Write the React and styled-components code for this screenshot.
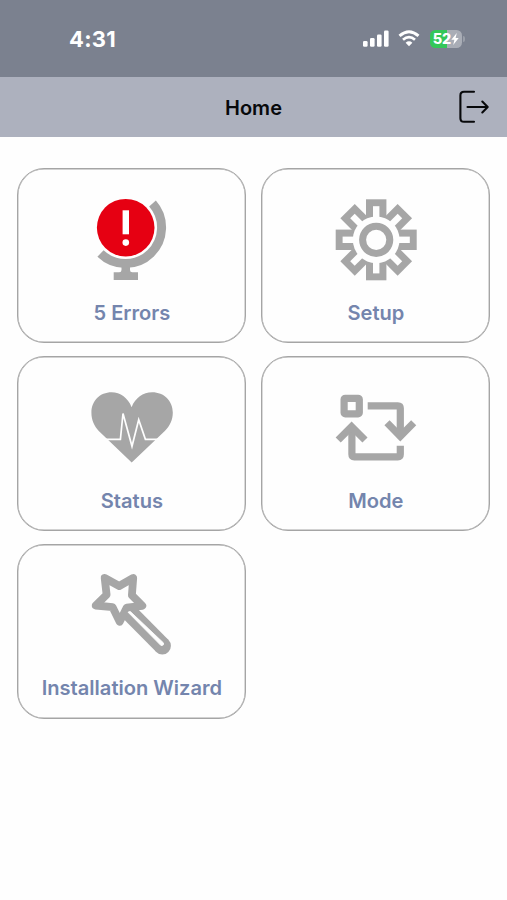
import React from "react";
import styled, { createGlobalStyle } from "styled-components";

const GlobalStyle = createGlobalStyle`
  * { box-sizing: border-box; }
  body { margin: 0; background: #fefefe; }
`;

const GREY = "#a6a6a6";

const Screen = styled.div`
  min-height: 900px;
  background: #fefefe;
  font-family: Inter, "Liberation Sans", sans-serif;
`;

const StatusBar = styled.div`
  display: flex;
  align-items: center;
  justify-content: space-between;
  height: 77px;
  padding: 0 42px 0 69px;
  background: #7b818f;
  color: #fff;
`;

const Clock = styled.span`
  font-size: 22px;
  line-height: 26px;
  font-weight: 700;
  letter-spacing: 0.3px;
`;

const Indicators = styled.div`
  display: flex;
  align-items: center;
  svg { display: block; }
`;

const Battery = styled.div`
  display: flex;
  align-items: center;
  margin-left: 10px;
`;

const BatteryBody = styled.div`
  display: flex;
  align-items: center;
  justify-content: center;
  width: 32px;
  height: 18px;
  border-radius: 5.5px;
  background: linear-gradient(to right, #34c759 52%, #a9adb6 52%);
  font-size: 14.5px;
  line-height: 18px;
  font-weight: 800;
  letter-spacing: -0.2px;
`;

const BatteryTip = styled.div`
  width: 2px;
  height: 6px;
  margin-left: 1px;
  border-radius: 0 2px 2px 0;
  background: #9a9fa9;
`;

const Header = styled.header`
  display: grid;
  grid-template-columns: 1fr auto 1fr;
  align-items: center;
  height: 60px;
  background: #adb1be;
`;

const Title = styled.h1`
  grid-column: 2;
  margin: 0;
  padding-top: 1px;
  font-size: 20px;
  line-height: 24px;
  font-weight: 600;
  color: #08090b;
`;

const ExitButton = styled.button`
  justify-self: end;
  display: flex;
  margin: 0 16px 0 0;
  padding: 0;
  border: 0;
  background: none;
`;

const Tiles = styled.main`
  display: grid;
  grid-template-columns: 229px 229px;
  grid-auto-rows: 175px;
  gap: 12.6px 15px;
  padding: 31.4px 0 0 17.4px;
`;

const Tile = styled.section`
  display: flex;
  flex-direction: column;
  align-items: center;
  padding-top: 25.6px;
  border: 1px solid #a5a5a5;
  border-radius: 27px;
  box-shadow: inset 0 0 0 0.4px #a5a5a5;
  svg { display: block; flex: none; }
`;

const Label = styled.span`
  margin-top: 15px;
  font-size: 20.1px;
  line-height: 26px;
  font-weight: 600;
  white-space: nowrap;
  color: #7485ad;
`;

const Icon = ({ children }) => (
  <svg width="90" height="90" viewBox="0 0 90 90" fill="none">{children}</svg>
);

const ErrorIcon = () => (
  <Icon>
    <path d="M65.5 8.5A36.1 36.1 0 0 1 13.5 58.5" stroke={GREY} strokeWidth="9" />
    <path d="M34.5 66h8.5v9q0 2.3 2.3 2.3H51V85H26.7v-7.7h5.5q2.3 0 2.3-2.3z" fill={GREY} />
    <circle cx="38.7" cy="32.7" r="28.8" fill="#e60012" />
    <rect x="35.6" y="15.3" width="6.4" height="24" fill="#fff" />
    <circle cx="38.8" cy="47.6" r="3.3" fill="#fff" />
  </Icon>
);

const SetupIcon = () => (
  <Icon>
    <g transform="translate(45.2 44.8)">
      {[0, 45, 90, 135].map((a) => (
        <rect key={a} x="-10.2" y="-40.5" width="20.4" height="81" fill={GREY} transform={`rotate(${a})`} />
      ))}
      <circle r="23.4" fill="#fefefe" />
      {[0, 45, 90, 135].map((a) => (
        <rect key={a} x="-3.2" y="-33.6" width="6.4" height="67.2" fill="#fefefe" transform={`rotate(${a})`} />
      ))}
      <circle r="13.6" fill="#fefefe" stroke={GREY} strokeWidth="7" />
    </g>
  </Icon>
);

const StatusIcon = () => (
  <Icon>
    <path
      d="M44.7 79.5L11.8 48C7 43 4.4 37 4.4 29.6C4.4 18 13 9.3 24.5 9.3C33.5 9.3 41 15 44.6 24.2C48.2 15 56 9.3 65.2 9.3C77 9.3 85.8 18 85.8 29.6C85.8 37 83 43 77.8 48Z"
      fill={GREY}
    />
    <path d="M17 56.3H33.4L36 30.5L45 63.3L51.7 36.8L58.4 56.3H73" stroke="#fefefe" strokeWidth="1.7" />
  </Icon>
);

const ModeIcon = () => (
  <Icon>
    <rect x="13.1" y="15.3" width="15.2" height="15.6" rx="1.2" stroke={GREY} strokeWidth="7.2" />
    <g stroke={GREY} strokeWidth="7.2">
      <path d="M36.7 22.8H66.8Q69.3 22.8 69.3 25.3V53" />
      <path d="M56 39.8L69.3 53.3L82.7 39.8" />
      <path d="M69.3 62.8V71.3Q69.3 73.8 66.8 73.8H23.4Q20.9 73.8 20.9 71.3V44" />
      <path d="M7.2 57L20.6 43.6L34 57" />
    </g>
  </Icon>
);

const WizardIcon = () => (
  <Icon>
    <path d="M42 42.2L75.2 75.8" stroke={GREY} strokeWidth="17.2" />
    <circle cx="75.3" cy="75.9" r="8.6" fill={GREY} />
    <path
      d="M17.7 8L32.2 16L46.2 8L44.9 25.2L55.3 35.8L39.8 37.6L32.7 51.8L25.6 37.2L8.7 35.5L19.6 24.8Z"
      fill="#fefefe"
      stroke={GREY}
      strokeWidth="7.8"
      strokeLinejoin="round"
    />
    <path d="M41 42.2L43.4 41.6L76.6 73Q77.2 75.6 74 75.6Z" fill="#fefefe" stroke="#fefefe" strokeWidth="0.8" strokeLinejoin="round" />
  </Icon>
);

const SignalIcon = () => (
  <svg width="26" height="17" viewBox="0 0 26 17" fill="#fff">
    <rect x="0" y="11" width="4.6" height="5.8" rx="1.3" />
    <rect x="7" y="8" width="4.6" height="8.8" rx="1.3" />
    <rect x="14" y="4.4" width="4.6" height="12.4" rx="1.3" />
    <rect x="21" y="0.4" width="4.6" height="16.4" rx="1.3" />
  </svg>
);

const WifiIcon = () => (
  <svg width="22" height="17" viewBox="0 0 22 17" fill="none">
    <path d="M1.5 5.9Q11 -2.3 20.5 5.9" stroke="#fff" strokeWidth="3" />
    <path d="M5 9.7Q11 4.6 17 9.7" stroke="#fff" strokeWidth="2.8" />
    <path d="M11 16.2L7.6 12.7Q11 9.9 14.4 12.7Z" fill="#fff" />
  </svg>
);

const WifiSlot = styled.div`
  margin-left: 9px;
`;

const BoltIcon = () => (
  <svg width="8" height="12" viewBox="0 0 8 12" fill="#fff">
    <path d="M5.8 0L0.3 6.8H3.4L2.2 12L7.7 5H4.6Z" />
  </svg>
);

const ExitIcon = () => (
  <svg width="34" height="36" viewBox="0 0 34 36" fill="none" stroke="#08090b" strokeWidth="2.1" strokeLinecap="round" strokeLinejoin="round">
    <path d="M17 2.8H7Q3.4 2.8 3.4 6.4V29.2Q3.4 32.8 7 32.8H17" />
    <path d="M10.5 18H30.5M25.3 12.6L30.7 18L25.3 23.4" />
  </svg>
);

const tiles = [
  { label: "5 Errors", Glyph: ErrorIcon },
  { label: "Setup", Glyph: SetupIcon },
  { label: "Status", Glyph: StatusIcon },
  { label: "Mode", Glyph: ModeIcon },
  { label: "Installation Wizard", Glyph: WizardIcon },
];

export default function App() {
  return (
    <Screen>
      <GlobalStyle />
      <StatusBar>
        <Clock>4:31</Clock>
        <Indicators>
          <SignalIcon />
          <WifiSlot><WifiIcon /></WifiSlot>
          <Battery>
            <BatteryBody>52<BoltIcon /></BatteryBody>
            <BatteryTip />
          </Battery>
        </Indicators>
      </StatusBar>
      <Header>
        <Title>Home</Title>
        <ExitButton aria-label="Log out"><ExitIcon /></ExitButton>
      </Header>
      <Tiles>
        {tiles.map(({ label, Glyph }) => (
          <Tile key={label}>
            <Glyph />
            <Label>{label}</Label>
          </Tile>
        ))}
      </Tiles>
    </Screen>
  );
}
